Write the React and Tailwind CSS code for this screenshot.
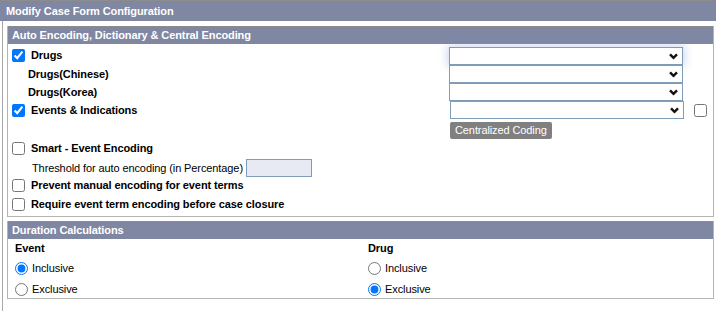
import React from 'react';

const Chevron = () => (
  <svg width="9" height="7" viewBox="0 0 9 7" className="absolute right-[4px] top-[5px]">
    <path d="M1 1.3 L4.5 4.8 L8 1.3" fill="none" stroke="#111" strokeWidth="2.4" />
  </svg>
);

const Select = ({ focus, className = '' }) => (
  <div
    className={`relative h-[18px] w-[234px] border border-[#7f9db9] bg-white ${
      focus ? 'shadow-[0_0_9px_2px_rgba(120,150,210,0.35)]' : ''
    } ${className}`}
  >
    <Chevron />
  </div>
);

const Check = ({ checked }) => (
  <input type="checkbox" defaultChecked={checked} className="m-0 h-[13px] w-[13px] shrink-0" />
);

const Radio = ({ checked, name }) => (
  <input type="radio" name={name} defaultChecked={checked} className="m-0 h-[13px] w-[13px] shrink-0" />
);

const SectionHeader = ({ children }) => (
  <div className="flex h-[18px] items-center border-t border-[#8c8c8c] bg-[#7f87a3] px-[4px] font-bold text-white">
    {children}
  </div>
);

export default function App() {
  return (
    <div className="h-[313px] w-[716px] bg-white font-['Liberation_Sans',Arial,sans-serif] text-[11px] tracking-[-0.1px] text-black">
      <div className="flex h-[21px] items-center border-t border-[#8c8c8c] bg-[#7f87a3] px-[6px] font-bold text-white">
        Modify Case Form Configuration
      </div>
      <div className="ml-[2px] border-l border-[#a8a8a8] pl-[4px] pt-[5px] pb-[12px]">
        <div className="w-[707px] border-r border-b border-l border-[#b4b4b4]">
          <SectionHeader>Auto Encoding, Dictionary &amp; Central Encoding</SectionHeader>
          <div className="pt-[3px]">
            <div className="flex h-[18px] items-start">
              <div className="flex w-[441px] items-center gap-[6px] pl-[4px] font-bold">
                <Check checked />
                <span>Drugs</span>
              </div>
              <Select focus />
            </div>
            <div className="flex h-[18px] items-center">
              <div className="w-[441px] pl-[20px] pt-[1px] font-bold">Drugs(Chinese)</div>
              <Select />
            </div>
            <div className="flex h-[18px] items-center">
              <div className="w-[441px] pl-[20px] pt-[1px] font-bold">Drugs(Korea)</div>
              <Select />
            </div>
            <div className="flex h-[18px] items-center">
              <div className="flex w-[442px] items-center gap-[6px] pl-[4px] font-bold">
                <Check checked />
                <span>Events &amp; Indications</span>
              </div>
              <Select />
              <div className="ml-[10px] flex">
                <Check />
              </div>
            </div>
            <div className="flex pl-[442px] pt-[3px]">
              <div className="flex h-[17px] items-center rounded-[2px] bg-[#808080] px-[5px] text-white">
                Centralized Coding
              </div>
            </div>
            <div className="mt-[1px] flex h-[16px] items-center gap-[6px] pl-[4px] font-bold">
              <Check />
              <span>Smart - Event Encoding</span>
            </div>
            <div className="mt-[3px] flex h-[18px] items-center pl-[24px]">
              <span className="pt-[1px]">Threshold for auto encoding (in Percentage)</span>
              <div className="ml-[3px] h-[18px] w-[66px] border border-[#7f9db9] bg-[#e8eaf3]" />
            </div>
            <div className="flex h-[17px] items-center gap-[6px] pl-[4px] font-bold">
              <Check />
              <span>Prevent manual encoding for event terms</span>
            </div>
            <div className="mt-[1px] flex h-[18px] items-center gap-[6px] pl-[4px] font-bold">
              <Check />
              <span>Require event term encoding before case closure</span>
            </div>
            <div className="h-[3px]" />
          </div>
        </div>
        <div className="mt-[4px] w-[707px] border-r border-b border-l border-[#b4b4b4]">
          <SectionHeader>Duration Calculations</SectionHeader>
          <div className="grid grid-cols-[353px_1fr]">
            {[
              ['Event', 'ev', true],
              ['Drug', 'dr', false],
            ].map(([title, name, incl]) => (
              <div key={name} className="pl-[7px]">
                <div className="flex h-[18px] items-center pt-[1px] font-bold">{title}</div>
                <div className="mt-[2px] flex h-[19px] items-center gap-[4px]">
                  <Radio name={name} checked={incl} />
                  <span>Inclusive</span>
                </div>
                <div className="mt-[2px] flex h-[18px] items-center gap-[4px]">
                  <Radio name={name} checked={!incl} />
                  <span>Exclusive</span>
                </div>
              </div>
            ))}
          </div>
        </div>
      </div>
    </div>
  );
}
